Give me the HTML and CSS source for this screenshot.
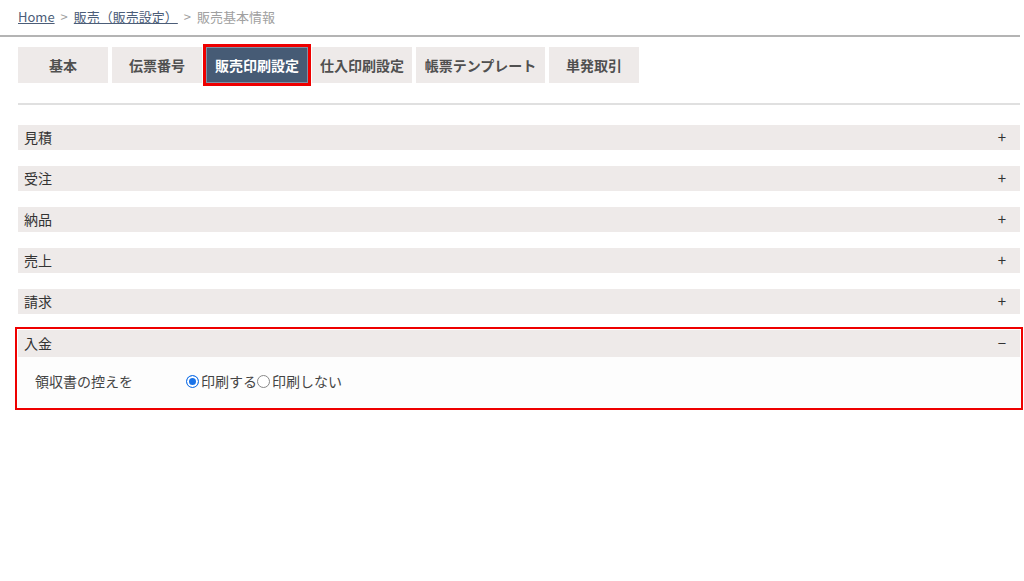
FILE: index.html
```html
<!DOCTYPE html>
<html lang="ja">
<head>
    <meta charset="UTF-8">
    <title>販売基本情報</title>
    <link rel="stylesheet" href="styles.css">
</head>
<body>

<div class="breadcrumb">
    <a href="#">Home</a><span class="sep">&gt;</span><a href="#">販売（販売設定）</a><span class="sep">&gt;</span><span class="current">販売基本情報</span>
</div>

<div class="page">
    <div class="tabs">
        <div class="tab w90">基本</div>
        <div class="tab w90">伝票番号</div>
        <div class="tab active">販売印刷設定</div>
        <div class="tab w100">仕入印刷設定</div>
        <div class="tab w129">帳票テンプレート</div>
        <div class="tab w90">単発取引</div>
    </div>

    <div class="accordion">
        <div class="acc-item"><div class="acc-head"><span>見積</span><span class="sign">+</span></div></div>
        <div class="acc-item"><div class="acc-head"><span>受注</span><span class="sign">+</span></div></div>
        <div class="acc-item"><div class="acc-head"><span>納品</span><span class="sign">+</span></div></div>
        <div class="acc-item"><div class="acc-head"><span>売上</span><span class="sign">+</span></div></div>
        <div class="acc-item"><div class="acc-head"><span>請求</span><span class="sign">+</span></div></div>
        <div class="acc-item open">
            <div class="acc-head"><span>入金</span><span class="sign">&minus;</span></div>
            <div class="acc-body">
                <span class="field-label">領収書の控えを</span>
                <label class="radio"><span class="dot checked"></span>印刷する</label><label class="radio"><span class="dot"></span>印刷しない</label>
            </div>
        </div>
    </div>
</div>

</body>
</html>
```

FILE: styles.css
```css
body {
    margin: 0;
    background-color: #fff;
    font-family: "Noto Sans CJK JP", "Noto Sans", sans-serif;
    font-size: 13px;
    color: #333;
}
.breadcrumb {
    width: 1002px;
    height: 35px;
    padding-left: 18px;
    line-height: 33px;
    border-bottom: 2px solid #b4b4b4;
    color: #a0a0a0;
}
.breadcrumb a {
    color: #4b5d78;
    text-decoration: underline;
}
.breadcrumb .sep {
    margin: 0 6px;
    color: #a0a0a0;
}
.page {
    padding: 10px 4px 40px 18px;
}
.tabs {
    display: flex;
    gap: 4px;
    padding-bottom: 20px;
    border-bottom: 2px solid #e0e0e0;
}
.tab {
    height: 36px;
    line-height: 36px;
    text-align: center;
    background-color: #eeeae9;
    color: #505050;
    font-size: 14px;
    font-weight: bold;
}
.w90 { width: 90px; }
.w100 { width: 100px; }
.w129 { width: 129px; }
.tab.active {
    width: 102px;
    background-color: #465b75;
    color: #fff;
    outline: 3px solid #ee0000;
    outline-offset: 0;
    box-shadow: inset 0 0 0 1px #8090a4;
}
.accordion {
    display: flex;
    flex-direction: column;
    gap: 16px;
    padding-top: 20px;
}
.acc-head {
    display: flex;
    justify-content: space-between;
    align-items: center;
    height: 23px;
    padding: 0 14px 2px 6px;
    background-color: #eeeae9;
    color: #333;
    font-size: 14px;
}
.sign {
    font-size: 15px;
}
.acc-item.open {
    margin: -3px -3px 0;
    padding: 1px;
    border: 2px solid #ee0000;
}
.acc-item.open .acc-head {
    height: 25px;
}
.acc-body {
    display: flex;
    align-items: center;
    height: 48px;
    padding-left: 17px;
    padding-bottom: 2px;
    background-color: #fdfdfd;
    color: #444;
    font-size: 14px;
}
.field-label {
    width: 151px;
}
.radio {
    display: flex;
    align-items: center;
}
.dot {
    width: 11px;
    height: 11px;
    margin-right: 2px;
    border: 1px solid #888;
    border-radius: 50%;
    background-color: #fff;
}
.dot.checked {
    border-color: #1a73e8;
    background-color: #1a73e8;
    box-shadow: inset 0 0 0 2px #fff;
}
```
